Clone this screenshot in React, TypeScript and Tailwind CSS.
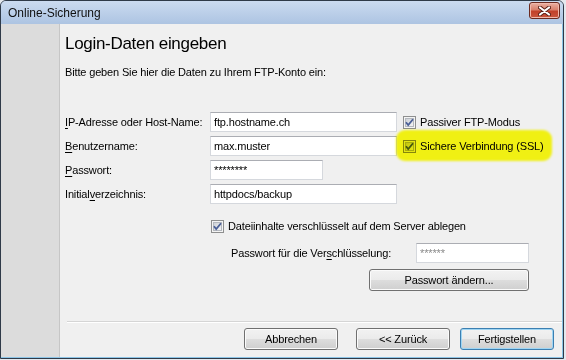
import React from "react";

const Check = () => (
  <svg width="13" height="13" viewBox="0 0 13 13" className="shrink-0">
    <defs>
      <linearGradient id="cbg" x1="0" y1="0" x2="1" y2="1">
        <stop offset="0" stopColor="#cbcfd5" />
        <stop offset="1" stopColor="#f6f6f6" />
      </linearGradient>
    </defs>
    <rect x="0.5" y="0.5" width="12" height="12" fill="#f4f4f4" stroke="#8e8f8f" />
    <rect x="2.5" y="2.5" width="8" height="8" fill="url(#cbg)" stroke="#b4b8be" />
    <path d="M3 6.2 L5.2 9 L10 3.2" fill="none" stroke="#4a5f97" strokeWidth="1.8" />
  </svg>
);

const Field = ({ value, w, dim }: { value: string; w: string; dim?: boolean }) => (
  <div
    className={`${w} h-[20px] bg-white border border-[#d5d8dd] border-t-[#abadb3] flex items-center pl-[3px] ${
      dim ? "text-[#8a8a8a]" : "text-black"
    }`}
  >
    {value}
  </div>
);

const Btn = ({ children, w, focus }: { children: React.ReactNode; w: string; focus?: boolean }) => (
  <div
    className={`${w} h-[22px] rounded-[3px] border flex items-center justify-center bg-[linear-gradient(to_bottom,#f2f2f2_0%,#ebebeb_48%,#dddddd_52%,#cfcfcf_100%)] ${
      focus
        ? "border-[#3c7fb1] shadow-[inset_0_0_0_1px_#9fd5f3]"
        : "border-[#707070] shadow-[inset_0_0_0_1px_#fbfbfb]"
    }`}
  >
    {children}
  </div>
);

const Label = ({ pre, key1, post }: { pre: string; key1: string; post: string }) => (
  <span>
    {pre}
    <span className="underline underline-offset-2">{key1}</span>
    {post}
  </span>
);

export default function App() {
  return (
    <div className="w-[566px] h-[360px] bg-[#e4e8ee] overflow-hidden font-['Liberation_Sans',Arial,sans-serif] text-[11px] tracking-[-0.15px] text-black">
      <div className="w-[564px] h-[359px] flex flex-col rounded-t-[6px] border border-[#2f3a48] bg-[#b6cbe6]">
        {/* title bar */}
        <div className="h-[23px] flex items-center justify-between pl-[7px] pr-[3px] rounded-t-[5px] bg-gradient-to-b from-[#cbdbf0] to-[#adc4e2]">
          <span className="text-[12px] text-[#111] tracking-normal">Online-Sicherung</span>
          <div className="w-[31px] h-[17px] mt-[-4px] rounded-[3px] border border-[#6b2a20] flex items-center justify-center bg-[linear-gradient(to_bottom,#eab0a2_0%,#d9806c_45%,#c2412a_55%,#c9563e_100%)] shadow-[inset_0_0_0_1px_#f0b9ad]">
            <svg width="13" height="10" viewBox="0 0 13 10">
              <path d="M2 1.5 L11 8.5 M11 1.5 L2 8.5" stroke="#5a1f16" strokeWidth="4" strokeLinecap="round" />
              <path d="M2 1.5 L11 8.5 M11 1.5 L2 8.5" stroke="#ffffff" strokeWidth="2.2" strokeLinecap="round" />
            </svg>
          </div>
        </div>

        {/* body */}
        <div className="flex-1 flex border-b border-[#8cc4e6]">
          <div className="w-[59px] bg-[#dcdcdc] border-r border-[#c6c6c6]" />
          <div className="flex-1 flex flex-col bg-[#f0f0f0] border-r border-[#8cc4e6] pl-[5px]">
            <h1 className="mt-[9px] h-[22px] leading-[22px] text-[17px] tracking-[-0.3px]">Login-Daten eingeben</h1>
            <p className="mt-[11px] leading-[13px]">Bitte geben Sie hier die Daten zu Ihrem FTP-Konto ein:</p>

            <div className="mt-[33px] flex flex-col gap-[4px]">
              <div className="flex items-center h-[20px]">
                <div className="w-[145px]">
                  <Label pre="" key1="I" post="P-Adresse oder Host-Name:" />
                </div>
                <Field value="ftp.hostname.ch" w="w-[187px]" />
                <div className="ml-[6px] flex items-center gap-[4px]">
                  <Check />
                  <span>Passiver FTP-Modus</span>
                </div>
              </div>
              <div className="flex items-center h-[20px]">
                <div className="w-[145px]">
                  <Label pre="" key1="B" post="enutzername:" />
                </div>
                <Field value="max.muster" w="w-[187px]" />
                <div className="relative ml-[6px] flex items-center gap-[4px]">
                  <span className="absolute left-[-7px] right-[-8px] top-[-8px] bottom-[-7px] rounded-[9px] bg-[#ffff14] blur-[1px] mix-blend-multiply" />
                  <span className="relative flex items-center gap-[4px] mix-blend-multiply">
                    <Check />
                    <span>Sichere Verbindung (SSL)</span>
                  </span>
                </div>
              </div>
              <div className="flex items-center h-[20px]">
                <div className="w-[145px]">
                  <Label pre="" key1="P" post="asswort:" />
                </div>
                <Field value="********" w="w-[113px]" />
              </div>
              <div className="flex items-center h-[20px]">
                <div className="w-[145px]">
                  <Label pre="Initial" key1="v" post="erzeichnis:" />
                </div>
                <Field value="httpdocs/backup" w="w-[187px]" />
              </div>
            </div>

            <div className="mt-[14px] ml-[146px] flex items-center gap-[4px] h-[16px]">
              <Check />
              <span>Dateiinhalte verschlüsselt auf dem Server ablegen</span>
            </div>

            <div className="mt-[9px] flex items-center h-[20px]">
              <div className="ml-[166px] w-[185px]">
                <Label pre="Passwort für die Ver" key1="s" post="chlüsselung:" />
              </div>
              <Field value="******" w="w-[113px]" dim />
            </div>

            <div className="mt-[6px] ml-[304px]">
              <Btn w="w-[160px]">Passwort ändern...</Btn>
            </div>

            <div className="mt-auto ml-[2px] border-t border-[#d5d5d5] border-b-[1px] border-b-white h-[2px]" />
            <div className="mt-[5px] mb-[7px] flex justify-end pr-[8px]">
              <Btn w="w-[94px]">Abbrechen</Btn>
              <div className="ml-[18px]">
                <Btn w="w-[94px]">&lt;&lt; Zurück</Btn>
              </div>
              <div className="ml-[10px]">
                <Btn w="w-[94px]" focus>
                  Fertigstellen
                </Btn>
              </div>
            </div>
          </div>
        </div>
      </div>
    </div>
  );
}
